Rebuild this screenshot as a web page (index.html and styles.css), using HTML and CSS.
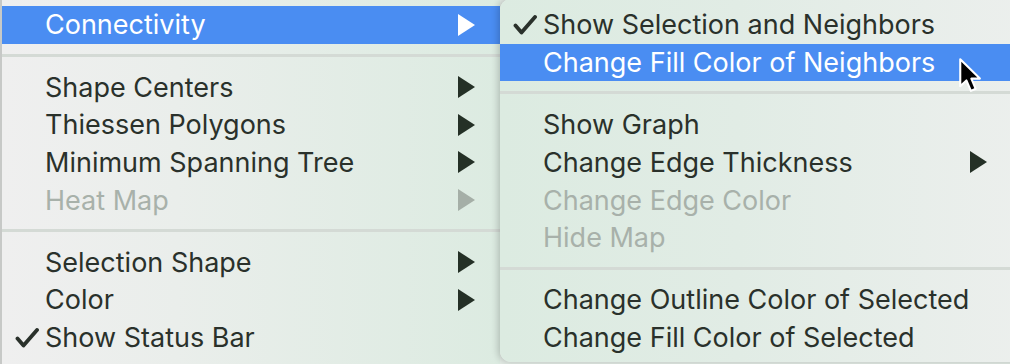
FILE: index.html
```html
<!DOCTYPE html>
<html lang="en">
<head>
    <meta charset="UTF-8">
    <title>Connectivity Menu</title>
    <link rel="stylesheet" href="styles.css">
</head>
<body>
    <div class="screen">
        <div class="menu menu-main">
            <div class="item selected"><span class="check"></span><span class="label">Connectivity</span><span class="arrow"></span></div>
            <div class="sep"></div>
            <div class="item"><span class="check"></span><span class="label">Shape Centers</span><span class="arrow"></span></div>
            <div class="item"><span class="check"></span><span class="label">Thiessen Polygons</span><span class="arrow"></span></div>
            <div class="item"><span class="check"></span><span class="label">Minimum Spanning Tree</span><span class="arrow"></span></div>
            <div class="item disabled"><span class="check"></span><span class="label">Heat Map</span><span class="arrow"></span></div>
            <div class="sep"></div>
            <div class="item"><span class="check"></span><span class="label">Selection Shape</span><span class="arrow"></span></div>
            <div class="item"><span class="check"></span><span class="label">Color</span><span class="arrow"></span></div>
            <div class="item">
                <span class="check"><svg viewBox="0 0 24 20" width="24" height="20"><path d="M2.5 10.5 L8.5 17.5 L22 2" fill="none" stroke="currentColor" stroke-width="3.8" stroke-linecap="round" stroke-linejoin="round"/></svg></span>
                <span class="label">Show Status Bar</span>
            </div>
        </div>

        <div class="menu menu-sub">
            <div class="item">
                <span class="check"><svg viewBox="0 0 24 20" width="24" height="20"><path d="M2.5 10.5 L8.5 17.5 L22 2" fill="none" stroke="currentColor" stroke-width="3.8" stroke-linecap="round" stroke-linejoin="round"/></svg></span>
                <span class="label">Show Selection and Neighbors</span>
            </div>
            <div class="item selected"><span class="check"></span><span class="label">Change Fill Color of Neighbors</span></div>
            <div class="sep"></div>
            <div class="item"><span class="check"></span><span class="label">Show Graph</span></div>
            <div class="item"><span class="check"></span><span class="label">Change Edge Thickness</span><span class="arrow"></span></div>
            <div class="item disabled"><span class="check"></span><span class="label">Change Edge Color</span></div>
            <div class="item disabled"><span class="check"></span><span class="label">Hide Map</span></div>
            <div class="sep"></div>
            <div class="item"><span class="check"></span><span class="label">Change Outline Color of Selected</span></div>
            <div class="item"><span class="check"></span><span class="label">Change Fill Color of Selected</span></div>
        </div>

        <svg class="cursor" viewBox="0 0 18 26" width="27" height="39">
            <path d="M1.5 1.5 L1.5 19.5 L5.6 15.6 L8.6 22.6 L11.8 21.2 L8.9 14.4 L14.6 14.4 Z" fill="#000" stroke="#fff" stroke-width="1.4" stroke-linejoin="round"/>
        </svg>
    </div>
</body>
</html>
```

FILE: styles.css
```css
body {
    margin: 0;
    padding: 0;
    background-color: #e4ece6;
    font-family: Inter, "Liberation Sans", Arial, sans-serif;
    overflow: hidden;
}
.screen {
    position: relative;
    width: 1010px;
    height: 364px;
    display: flex;
    align-items: flex-start;
    overflow: hidden;
}
.menu {
    box-sizing: border-box;
    font-size: 27px;
    color: #2a312b;
}
.menu-main {
    width: 500px;
    height: 364px;
    flex-shrink: 0;
    padding-top: 6px;
    border-left: 2px solid #c7c9c7;
    background: linear-gradient(90deg, #efefef 0%, #eaeeeb 35%, #dcebe1 100%);
}
.menu-sub {
    position: relative;
    width: 530px;
    height: 363px;
    flex-shrink: 0;
    margin-top: -1px;
    padding-top: 7px;
    border-radius: 11px 0 0 11px;
    background: linear-gradient(90deg, #dcebe1 0%, #e1ece5 45%, #ecefed 100%);
    box-shadow: -2px 0 7px rgba(0, 0, 0, 0.2);
}
.item {
    display: flex;
    align-items: center;
    height: 37.7px;
    padding-right: 25px;
}
.menu-sub .item {
    padding-right: 43px;
}
.check {
    width: 43px;
    flex-shrink: 0;
    display: flex;
    justify-content: flex-end;
    padding-right: 6px;
    box-sizing: border-box;
}
.check svg {
    display: block;
}
.label {
    flex: 1;
    white-space: nowrap;
}
.arrow {
    width: 0;
    height: 0;
    border-left: 17px solid #243026;
    border-top: 11px solid transparent;
    border-bottom: 11px solid transparent;
}
.selected {
    background-color: #4a8df2;
    color: #ffffff;
}
.selected .arrow {
    border-left-color: #ffffff;
}
.disabled {
    color: #a8b1aa;
}
.disabled .arrow {
    border-left-color: #a5afa7;
}
.sep {
    height: 24.5px;
    box-sizing: border-box;
    padding-top: 10px;
}
.sep::before {
    content: "";
    display: block;
    height: 3px;
    background-color: #d4dad5;
}
.cursor {
    position: absolute;
    left: 958px;
    top: 57px;
}
```
